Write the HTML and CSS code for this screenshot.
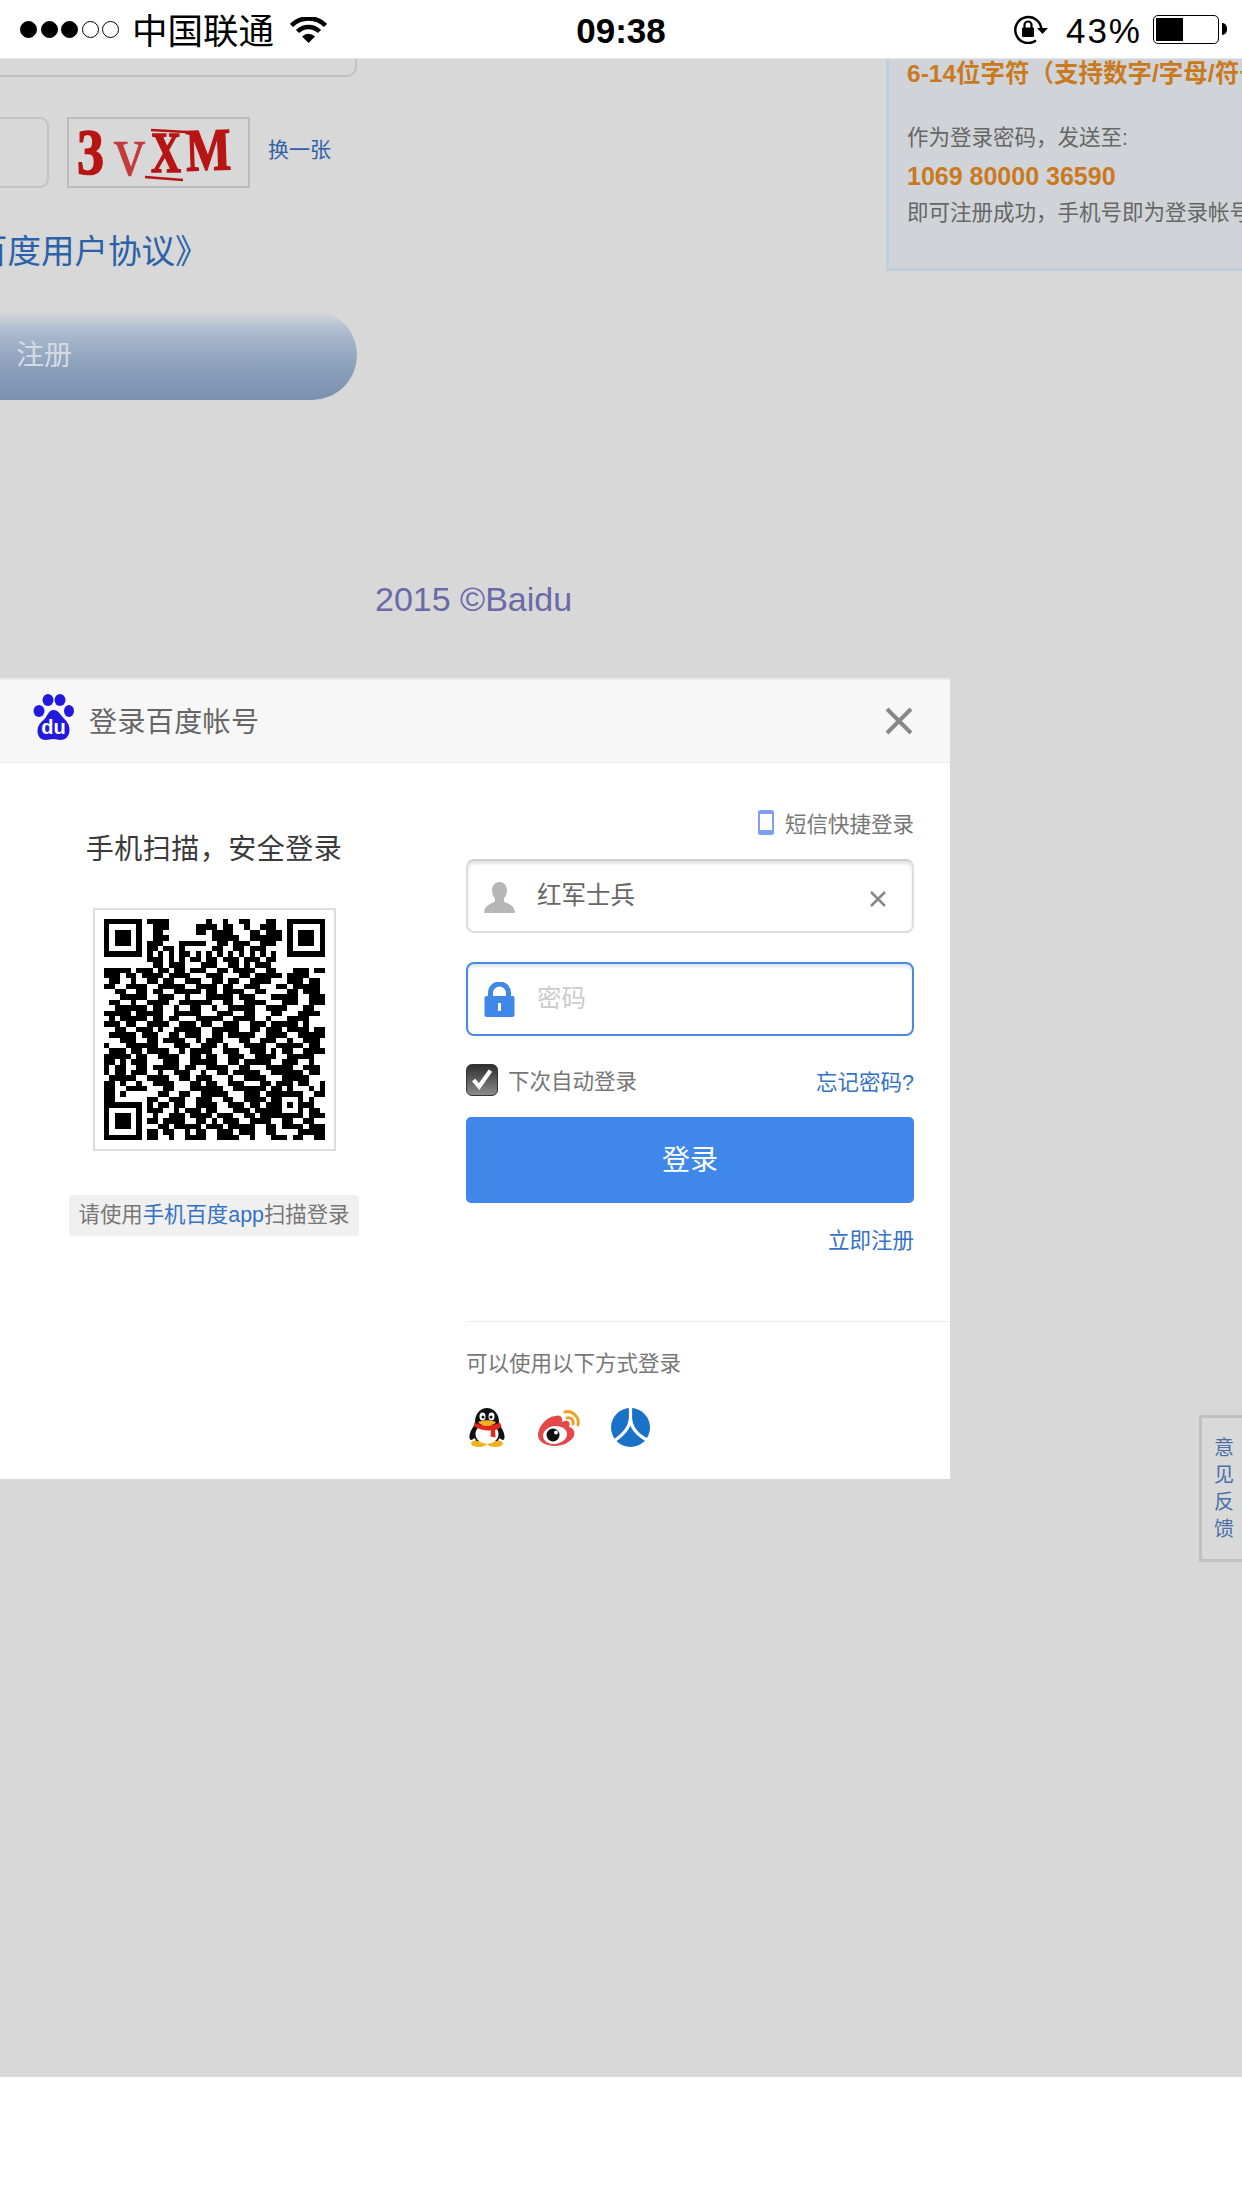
FILE: index.html
```html
<!DOCTYPE html>
<html lang="zh-CN">
<head>
<meta charset="utf-8">
<title>登录百度帐号</title>
<link rel="stylesheet" href="styles.css">
</head>
<body>
<header class="status">
  <div class="status-left">
    <div class="signal"><i class="dot on"></i><i class="dot on"></i><i class="dot on"></i><i class="dot"></i><i class="dot"></i></div>
    <span class="carrier">中国联通</span>
    <svg class="wifi" viewBox="0 0 37 26"><path class="wifi-arc" d="M1.5 8.5a24 24 0 0 1 34 0M7.5 14.5a15.5 15.5 0 0 1 22 0"/><path d="M18.5 26L12 19.5a9.200 9.200 0 0 1 13 0z"/></svg>
  </div>
  <div class="clock">09:38</div>
  <div class="status-right">
    <svg class="rotlock" viewBox="0 0 34 29"><path class="rot-arc" d="M27.300 15.500A13 13 0 1 0 22 25.500"/><path d="M23 13h11l-5.500 6z"/><path class="rot-shackle" d="M10.500 13v-3a3.500 3.500 0 0 1 7 0v3"/><rect x="8" y="12.500" width="12" height="9.500" rx="1"/></svg>
    <span class="battery-pct">43%</span>
    <div class="battery"><div class="battery-fill"></div></div>
    <div class="battery-nub"></div>
  </div>
</header>

<main class="stage">
  <div class="backdrop-top">
    <section class="reg-form">
      <div class="field-end"></div>
      <div class="captcha-row">
        <div class="captcha-input"></div>
        <div class="captcha">
          <svg viewBox="0 0 183 71" class="captcha-svg">
            <text x="10" y="57" class="cap-bold" font-size="66" textLength="27" lengthAdjust="spacingAndGlyphs">3</text>
            <text x="47" y="58" class="cap-thin" font-size="72" textLength="31" lengthAdjust="spacingAndGlyphs">v</text>
            <text x="84" y="55" class="cap-bold" font-size="56" textLength="30" lengthAdjust="spacingAndGlyphs">X</text>
            <text x="119" y="53" class="cap-bold" font-size="60" textLength="45" lengthAdjust="spacingAndGlyphs" transform="rotate(-2 140 40)">M</text>
            <path class="cap-line" d="M84 13l35 2M78 60l38 3"/>
          </svg>
        </div>
        <a class="captcha-change">换一张</a>
      </div>
      <p class="agree">百度用户协议》</p>
      <div class="reg-btn"><span>注册</span></div>
    </section>
    <aside class="sms-panel">
      <p class="sms-accent">6-14位字符（支持数字/字母/符号）</p>
      <p class="sms-note sms-first">作为登录密码，发送至:</p>
      <p class="sms-number">1069 80000 36590</p>
      <p class="sms-note sms-last">即可注册成功，手机号即为登录帐号</p>
    </aside>
  </div>
  <footer class="copyright">2015 ©Baidu</footer>

  <section class="modal">
    <div class="modal-head">
      <svg class="paw" viewBox="0 0 41 46">
        <ellipse cx="6" cy="17" rx="5.500" ry="6"/><ellipse cx="15" cy="6" rx="5.500" ry="6"/><ellipse cx="27" cy="6" rx="5.500" ry="6"/><ellipse cx="36" cy="17" rx="5" ry="6"/>
        <path d="M20.500 16c5 0 7 5 10 8s6 6 6 12c0 7-5 10-9 10-3 0-4-1-7-1s-5 1-8 1c-5 0-8-4-8-9 0-6 4-9 7-12s4-9 9-9z"/>
        <text x="20.500" y="40" class="paw-du" text-anchor="middle">du</text>
      </svg>
      <h2 class="modal-title">登录百度帐号</h2>
      <svg class="modal-close" viewBox="0 0 28 28"><path d="M2 2l24 24M26 2L2 26"/></svg>
    </div>
    <div class="modal-body">
      <div class="qr-col">
        <h3 class="qr-title">手机扫描，安全登录</h3>
        <div class="qr-frame">
          <svg class="qr" viewBox="0 0 41 41" shape-rendering="crispEdges">
            <path class="qr-finder" d="M0 0h7v7H0zM1 1v5h5V1zM2 2h3v3H2zM34 0h7v7h-7zM35 1v5h5V1zM36 2h3v3h-3zM0 34h7v7H0zM1 35v5h5v-5zM2 36h3v3H2zM32 32h5v5h-5zM33 33v3h3v-3zM34 34h1v1h-1z"/>
            <path class="qr-mod" d="M8 .5h4M19 .5h1M22 .5h1M25 .5h2M30 .5h2
M9 1.500h3M17 1.500h4M22 1.500h2M26 1.500h1M29 1.500h3
M9 2.500h2M17 2.500h2M20 2.500h4M27 2.500h2M30 2.500h3
M9 3.500h3M20 3.500h5M27 3.500h6
M8 4.500h3M14 4.500h5M21 4.500h2M24 4.500h3M29 4.500h3
M8 5.500h2M11 5.500h2M14 5.500h1M20 5.500h2M24 5.500h2M27 5.500h3
M8 6.500h1M10 6.500h1M12 6.500h1M14 6.500h2M17 6.500h1M19 6.500h1M21 6.500h1M23 6.500h1M25 6.500h1M27 6.500h1M29 6.500h1M31 6.500h1
M8 7.500h3M12 7.500h1M14 7.500h1M16 7.500h2M19 7.500h2M22 7.500h3M26 7.500h3M30 7.500h2
M9 8.500h2M12 8.500h3M18 8.500h3M23 8.500h2M26 8.500h1M28 8.500h3
M0 9.500h5M6 9.500h3M10 9.500h2M13 9.500h2M16 9.500h3M21 9.500h2M24 9.500h4M30 9.500h2M35 9.500h3M39 9.500h2
M0 10.500h3M4 10.500h2M7 10.500h4M12 10.500h4M19 10.500h3M25 10.500h2M28 10.500h5M34 10.500h4
M1 11.500h2M5 11.500h1M8 11.500h2M11 11.500h2M15 11.500h3M20 11.500h2M23 11.500h2M27 11.500h4M34 11.500h3M38 11.500h2
M0 12.500h2M4 12.500h4M10 12.500h5M17 12.500h4M22 12.500h2M26 12.500h3M32 12.500h2M35 12.500h5
M2 13.500h2M6 13.500h2M9 13.500h2M13 13.500h5M19 13.500h2M22 13.500h4M28 13.500h2M34 13.500h2M37 13.500h3
M3 14.500h5M10 14.500h3M15 14.500h1M19 14.500h5M25 14.500h3M31 14.500h5M38 14.500h3
M1 15.500h2M5 15.500h1M8 15.500h4M14 15.500h6M22 15.500h2M26 15.500h4M33 15.500h3M38 15.500h3
M2 16.500h6M9 16.500h2M13 16.500h1M16 16.500h2M20 16.500h1M23 16.500h5M30 16.500h4M37 16.500h2
M0 17.500h5M6 17.500h5M13 17.500h5M21 17.500h3M26 17.500h2M31 17.500h2M36 17.500h4
M1 18.500h1M3 18.500h5M9 18.500h2M12 18.500h2M17 18.500h5M24 18.500h4M30 18.500h1M34 18.500h4
M0 19.500h3M4 19.500h2M8 19.500h4M14 19.500h3M18 19.500h2M22 19.500h3M27 19.500h3M31 19.500h5M37 19.500h1
M2 20.500h2M6 20.500h3M10 20.500h1M13 20.500h5M20 20.500h5M27 20.500h2M30 20.500h3M34 20.500h4M39 20.500h2
M1 21.500h5M7 21.500h3M12 21.500h2M15 21.500h3M20 21.500h2M23 21.500h5M30 21.500h4M36 21.500h5
M3 22.500h3M8 22.500h2M11 22.500h4M17 22.500h1M19 22.500h3M25 22.500h2M29 22.500h3M34 22.500h1M37 22.500h3
M0 23.500h1M4 23.500h6M13 23.500h3M18 23.500h3M22 23.500h1M26 23.500h4M32 23.500h5M38 23.500h2
M1 24.500h3M5 24.500h2M8 24.500h4M14 24.500h1M16 24.500h4M22 24.500h3M27 24.500h3M31 24.500h1M33 24.500h2M37 24.500h4
M0 25.500h5M6 25.500h2M10 25.500h4M16 25.500h2M19 25.500h2M23 25.500h3M28 25.500h4M34 25.500h5
M0 26.500h2M3 26.500h1M5 26.500h3M11 26.500h3M16 26.500h5M23 26.500h2M26 26.500h5M33 26.500h3M38 26.500h1
M0 27.500h1M2 27.500h2M6 27.500h2M9 27.500h5M15 27.500h2M19 27.500h4M25 27.500h2M30 27.500h5M37 27.500h3
M0 28.500h1M2 28.500h2M5 28.500h3M10 28.500h1M13 28.500h3M18 28.500h1M21 28.500h2M24 28.500h5M31 28.500h6M38 28.500h2
M1 29.500h5M8 29.500h4M14 29.500h2M17 29.500h3M23 29.500h1M26 29.500h4M33 29.500h5
M0 30.500h2M3 30.500h1M6 30.500h1M9 30.500h4M16 30.500h2M19 30.500h2M23 30.500h3M29 30.500h2M32 30.500h3M36 30.500h2M40 30.500h1
M0 31.500h2M4 31.500h4M11 31.500h2M16 31.500h6M24 31.500h6M31 31.500h2M34 31.500h1M38 31.500h1M40 31.500h1
M0 32.500h2M3 32.500h1M10 32.500h2M14 32.500h2M18 32.500h5M26 32.500h3M30 32.500h2M39 32.500h2
M0 33.500h2M8 33.500h2M12 33.500h3M17 33.500h3M22 33.500h2M26 33.500h4M31 33.500h1M38 33.500h1
M8 34.500h1M10 34.500h2M13 34.500h2M17 34.500h4M23 34.500h3M27 34.500h2M30 34.500h2M37 34.500h2
M8 35.500h3M13 35.500h1M15 35.500h3M19 35.500h2M24 35.500h3M28 35.500h4M38 35.500h2
M9 36.500h1M12 36.500h3M16 36.500h4M21 36.500h3M26 36.500h2M29 36.500h3M38 36.500h3
M8 37.500h2M11 37.500h4M17 37.500h2M20 37.500h1M22 37.500h3M27 37.500h4M33 37.500h2M37 37.500h2
M10 38.500h2M13 38.500h5M19 38.500h3M23 38.500h5M30 38.500h2M33 38.500h4M38 38.500h3
M8 39.500h2M11 39.500h2M15 39.500h1M17 39.500h2M21 39.500h3M25 39.500h3M30 39.500h2M36 39.500h5
M8 40.500h2M12 40.500h1M15 40.500h4M21 40.500h4M27 40.500h1M31 40.500h3M35 40.500h2M39 40.500h2"/>
          </svg>
        </div>
        <p class="qr-hint">请使用<a class="link">手机百度app</a>扫描登录</p>
      </div>
      <div class="login-col">
        <div class="login-form">
          <div class="sms-link">
            <svg class="phone" viewBox="0 0 16 25"><rect width="16" height="25" rx="2.500"/><rect class="phone-screen" x="2" y="4" width="12" height="16"/></svg>
            <span>短信快捷登录</span>
          </div>
          <div class="input input-user">
            <svg class="input-icon input-icon-user" viewBox="0 0 31 31"><path class="i-person" d="M15.500 0c4.700 0 7.500 3.700 7.500 8.500 0 3.200-1.200 6-3 8v3c1.500 1.600 11 3 11 11.500H0c0-8.500 9.500-9.900 11-11.500v-3c-1.800-2-3-4.800-3-8C8 3.700 10.800 0 15.500 0z"/></svg>
            <span class="input-value">红军士兵</span>
            <svg class="input-clear" viewBox="0 0 16 16"><path d="M1 1l14 14M15 1L1 15"/></svg>
          </div>
          <div class="input input-focus">
            <svg class="input-icon" viewBox="0 0 30 35"><path class="i-shackle" d="M6 16V11a9 9 0 0 1 18 0v5"/><rect class="i-lock" y="14" width="30" height="21" rx="2"/><rect class="i-key" x="13.500" y="21" width="3" height="8"/></svg>
            <span class="input-placeholder">密码</span>
          </div>
          <div class="remember-row">
            <div class="checkbox"><svg viewBox="0 0 32 32"><path d="M7 16l6 7L25 6"/></svg></div>
            <span class="remember">下次自动登录</span>
            <a class="link forgot">忘记密码?</a>
          </div>
          <button class="login-btn"><span class="login-label">登录</span></button>
          <a class="link register">立即注册</a>
        </div>
        <div class="others">
          <p class="others-title">可以使用以下方式登录</p>
          <div class="others-icons">
            <svg class="ic-qq" viewBox="0 0 36 39">
              <ellipse class="q-yellow" cx="10" cy="35.500" rx="8" ry="3.500"/><ellipse class="q-yellow" cx="26" cy="35.500" rx="8" ry="3.500"/>
              <ellipse class="q-black" cx="18" cy="13.500" rx="12" ry="13.500"/>
              <path class="q-black" d="M7 15C3 20 0 25 .5 30c.5 3 3 2 5 0l2 3h21l2-3c2 2 4.500 3 5 0 .5-5-2.500-10-6.500-15z"/>
              <ellipse class="q-white" cx="18" cy="26" rx="11.500" ry="10"/>
              <path class="q-red" d="M5 14.500c8 4 18 4 26 0l1.500 4c-2 2-4 3-6.500 3.500l.5 7.500-5-1 .5-6c-6 .5-12-1-16.500-4z"/>
              <ellipse class="q-white" cx="13.500" cy="8.500" rx="3" ry="4"/><ellipse class="q-white" cx="22.500" cy="8.500" rx="3" ry="4"/>
              <circle class="q-black" cx="14" cy="9" r="1.500"/><circle class="q-black" cx="22" cy="9" r="1.500"/>
              <path class="q-yellow" d="M9 14c6-2.500 12-2.500 18 0-3 5-15 5-18 0z"/>
            </svg>
            <svg class="ic-wb" viewBox="0 0 42 38">
              <path class="w-red" d="M0 26C0 18 8 8 17 7c6-2 8 2 7 6 6-3 9 0 7 5 5 1 6 5 5 9-3 6-11 10-19 10C8 37 0 33 0 26z"/>
              <ellipse class="w-white" cx="17" cy="26" rx="12" ry="9" transform="rotate(-8 17 26)"/>
              <circle class="w-black" cx="15" cy="26" r="6.500"/>
              <circle class="w-white" cx="18" cy="23.500" r="2"/>
              <path class="w-arc" d="M27 3c7-2 15 5 13 13M29 9c4-1 7 2 6 6"/>
            </svg>
            <svg class="ic-rr" viewBox="0 0 39 39">
              <circle class="r-blue" cx="19.500" cy="19.500" r="19.500"/>
              <path class="r-man" d="M19.500 0v9C19.500 19 12 27 3 33M19.500 9c0 10 7 18 16.500 23"/>
            </svg>
          </div>
        </div>
      </div>
    </div>
  </section>

  <aside class="feedback">意<br>见<br>反<br>馈</aside>
</main>
</body>
</html>
```

FILE: styles.css
```css
* { box-sizing: border-box; }
html, body { margin: 0; padding: 0; }
body {
  width: 1242px;
  height: 2208px;
  overflow: hidden;
  background: #fff;
  font-family: "Liberation Sans", "Noto Sans CJK SC", sans-serif;
  color: #666;
}
p, h2, h3 { margin: 0; font-weight: normal; }
a { color: inherit; text-decoration: none; }

/* status bar */
.status {
  height: 59px;
  display: grid;
  grid-template-columns: 1fr auto 1fr;
  align-items: center;
  background: #fff;
  border-bottom: 1px solid #e6e6e6;
  color: #000;
}
.status-left { display: flex; align-items: center; padding-left: 20px; }
.signal { display: flex; gap: 3.500px; }
.dot { width: 17px; height: 17px; border-radius: 50%; border: 1.5px solid #000; }
.dot.on { background: #000; }
.carrier { font-size: 35.500px; line-height: 40px; margin: 5px 0 0 13px; }
.wifi { width: 37px; height: 26px; margin-left: 16px; margin-top: 2px; }
.wifi-arc { fill: none; stroke: #000; stroke-width: 4.5; }
.clock { font-size: 35px; font-weight: bold; line-height: 40px; margin-top: 4px; }
.status-right { display: flex; align-items: center; justify-content: flex-end; padding-right: 15px; }
.rotlock { width: 34px; height: 29px; }
.rot-arc { fill: none; stroke: #000; stroke-width: 2.4; }
.rot-shackle { fill: none; stroke: #000; stroke-width: 2.2; }
.battery-pct { font-size: 35px; line-height: 40px; letter-spacing: 2px; margin-left: 18px; margin-top: 4px; }
.battery { width: 66px; height: 29px; margin-left: 11px; border: 1.5px solid #000; border-radius: 5px; padding: 2px; }
.battery-fill { width: 27px; height: 100%; background: #000; }
.battery-nub { width: 5px; height: 12px; margin-left: 3px; background: #000; border-radius: 0 6px 6px 0; }

/* dimmed page behind the dialog */
.stage {
  position: relative;
  height: 2018px;
  background: #d8d8d8;
  overflow: hidden;
}
.backdrop-top { display: flex; height: 341px; }
.reg-form { width: 357px; flex: none; }
.field-end {
  height: 18px;
  border: solid #c2c2c2;
  border-width: 0 2px 2px 0;
  border-bottom-right-radius: 10px;
}
.captcha-row { display: flex; align-items: center; margin-top: 40px; width: 420px; }
.captcha-input {
  width: 49px;
  height: 71px;
  border: solid #c4c4c4;
  border-width: 2px 2px 2px 0;
  border-radius: 0 9px 9px 0;
}
.captcha { width: 183px; height: 71px; margin-left: 18px; border: 2px solid #bdbdbd; flex: none; }
.captcha-svg { display: block; width: 183px; height: 71px; margin: -2px; }
.cap-bold { font-family: "Liberation Serif", serif; font-weight: bold; fill: #b71414; stroke: #b71414; stroke-width: 1.600; }
.cap-thin { font-family: "Liberation Serif", serif; fill: #c23a3a; stroke: #c23a3a; stroke-width: .6; }
.cap-line { fill: none; stroke: #b71414; stroke-width: 2.5; }
.captcha-change { font-size: 21px; line-height: 30px; margin: 0 0 5px 18px; color: #2f62a6; white-space: nowrap; }
.agree {
  margin: 39px 0 0 -26px;
  font-size: 33.500px;
  line-height: 50px;
  color: #2a61a9;
  white-space: nowrap;
}
.reg-btn {
  margin-top: 33px;
  height: 90px;
  padding: 0 0 5px 16px;
  display: flex;
  align-items: center;
  border-radius: 0 45px 45px 0;
  background: linear-gradient(#d9d9d9 0, #a9b9ce 26%, #8a9fba 65%, #7a90ae 100%);
  color: #d5dbe3;
  font-size: 28px;
}
.sms-panel {
  margin-left: auto;
  width: 356px;
  height: 212px;
  padding-left: 18px;
  background: #d0d4d8;
  border: solid #bfcedb;
  border-width: 0 0 3px 3px;
  overflow: hidden;
  white-space: nowrap;
}
.sms-accent { font-size: 24.500px; font-weight: bold; line-height: 30px; color: #c97a1e; text-spacing-trim: space-all; }
.sms-note { font-size: 21.500px; line-height: 30px; color: #666; }
.sms-first { margin-top: 34px; }
.sms-number { margin-top: 8px; font-size: 25px; font-weight: bold; line-height: 30px; color: #c97a1e; }
.sms-last { margin-top: 7px; }
.copyright { margin: 179px 0 0 375px; font-size: 34px; line-height: 40px; color: #6a6aa8; }

/* dialog */
.modal {
  position: absolute;
  left: 0;
  top: 619px;
  width: 950px;
  height: 801px;
  background: #fff;
}
.modal-head {
  height: 85px;
  display: flex;
  align-items: center;
  padding: 0 37px 0 33px;
  background: #f7f7f7;
  border-top: 2px solid #ebebeb;
  border-bottom: 1px solid #f0f0f0;
}
.paw { width: 41px; height: 46px; margin-bottom: 9px; fill: #2319dc; }
.paw-du { font-size: 20px; font-weight: bold; fill: #fff; }
.modal-title { margin: 3px 0 0 15px; font-size: 28px; line-height: 40px; letter-spacing: .4px; color: #666; }
.modal-close { width: 28px; height: 28px; margin-left: auto; fill: none; stroke: #888; stroke-width: 4; }
.modal-body { display: flex; }
.qr-col { width: 428px; display: flex; flex-direction: column; align-items: center; padding-top: 67px; flex: none; }
.qr-title { font-size: 28px; line-height: 40px; letter-spacing: .5px; color: #3a3a3a; }
.qr-frame { width: 243px; height: 243px; margin-top: 38px; border: 2px solid #ddd; padding: 9px; }
.qr { display: block; width: 221px; height: 221px; }
.qr-finder { fill: #000; fill-rule: evenodd; }
.qr-mod { fill: none; stroke: #000; stroke-width: 1; }
.qr-hint {
  margin-top: 44px;
  width: 290px;
  height: 41px;
  text-align: center;
  font-size: 21.400px;
  line-height: 41px;
  color: #777;
  background: #f0f0f0;
  border-radius: 4px;
  white-space: nowrap;
}
.link { color: #3472c4; }
.login-col { margin-left: 38px; flex: 1; }
.login-form { display: flex; flex-direction: column; margin-right: 36px; padding-top: 44px; }
.sms-link {
  display: flex;
  align-items: center;
  justify-content: flex-end;
  gap: 11px;
  height: 30px;
  font-size: 21.500px;
  color: #777;
}
.phone { width: 16px; height: 25px; fill: #7f9ff5; }
.phone-screen { fill: #fff; }
.input {
  display: flex;
  align-items: center;
  height: 74px;
  margin-top: 22px;
  padding: 0 26px 0 16px;
  border: 2px solid #ddd;
  border-top-color: #cfcfcf;
  border-radius: 8px;
  box-shadow: inset 0 3px 3px #e4e4e4;
  font-size: 24.500px;
  line-height: 30px;
}
.input-focus { margin-top: 29px; border-color: #4a8ae0; box-shadow: inset 0 3px 3px #dfe8f5; }
.input-icon { width: 31px; height: 35px; flex: none; }
.input-icon-user { margin-top: 2px; }
.i-person { fill: #b6b6b6; }
.i-lock { fill: #3f87e8; }
.i-key { fill: #fff; }
.i-shackle { fill: none; stroke: #3f87e8; stroke-width: 5; }
.input-value { margin-left: 22px; margin-top: -1px; color: #666; }
.input-placeholder { margin-left: 22px; color: #ccc; }
.input-clear { width: 16px; height: 16px; margin: 5px 0 0 auto; fill: none; stroke: #888; stroke-width: 2.500; }
.remember-row { display: flex; align-items: center; height: 32px; margin-top: 28px; font-size: 21.500px; }
.checkbox {
  width: 32px;
  height: 32px;
  border: 1px solid #333;
  border-radius: 6px;
  background: linear-gradient(#2e2e2e, #8c8c8c);
}
.checkbox svg { display: block; width: 30px; height: 30px; fill: none; stroke: #fff; stroke-width: 4.500; }
.remember { margin: 0 0 2px 10px; color: #777; }
.forgot { margin-left: auto; }
.login-btn {
  margin-top: 21px;
  height: 86px;
  padding: 0 0 4px;
  border: 0;
  border-radius: 5px;
  background: #4087ea;
  color: #fff;
  font-family: inherit;
  font-size: 28px;
}
.register { margin-top: 23px; font-size: 21.500px; line-height: 30px; text-align: right; }
.others { margin-top: 65px; padding-top: 27px; border-top: 1px solid #eee; }
.others-title { font-size: 21.500px; line-height: 30px; color: #777; }
.others-icons { display: flex; align-items: center; gap: 33px; margin-top: 29px; padding-left: 3px; }
.ic-qq { width: 36px; height: 39px; }
.ic-wb { width: 42px; height: 38px; }
.ic-rr { width: 39px; height: 39px; margin-left: -2px; }
.q-black { fill: #111; }
.q-white { fill: #fff; }
.q-yellow { fill: #f4b01c; }
.q-red { fill: #e0281c; }
.w-red { fill: #e5484a; }
.w-white { fill: #fff; }
.w-black { fill: #111; }
.w-arc { fill: none; stroke: #f0a020; stroke-width: 3; stroke-linecap: round; }
.r-blue { fill: #1a72c8; }
.r-man { fill: none; stroke: #fff; stroke-width: 3.200; }

/* feedback tab */
.feedback {
  position: absolute;
  right: -4px;
  top: 1356px;
  width: 47px;
  height: 147px;
  padding: 17px 0 0 12px;
  border: 3px solid #c0c0c0;
  background: #d9d9d9;
  color: #4a70a8;
  font-size: 20px;
  line-height: 27px;
}
```
